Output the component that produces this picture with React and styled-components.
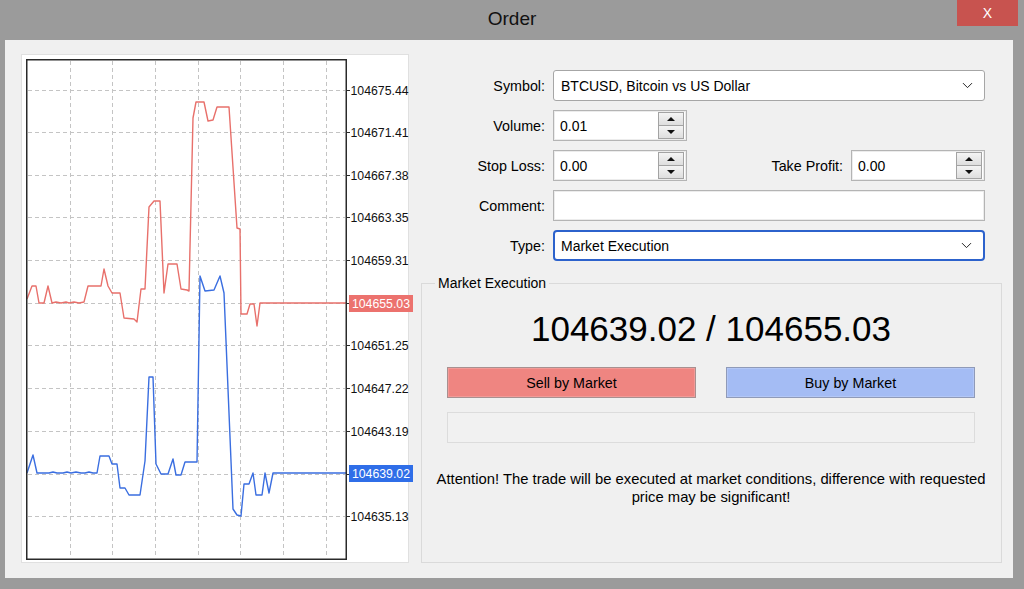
import React from "react";
import styled, { createGlobalStyle } from "styled-components";
import { ChevronDown } from "lucide-react";

const Global = createGlobalStyle`
  html, body { margin: 0; padding: 0; }
  body {
    background: #9b9b9b;
    font-family: "Liberation Sans", Arial, sans-serif;
    color: #000;
  }
  * { box-sizing: border-box; }
`;

const Window = styled.div`
  width: 1024px;
  height: 589px;
  display: flex;
  flex-direction: column;
  background: #9b9b9b;
`;

const TitleBar = styled.div`
  height: 40px;
  display: grid;
  grid-template-columns: 1fr auto 1fr;
  align-items: start;
`;

const Title = styled.div`
  grid-column: 2;
  font-size: 19px;
  line-height: 38px;
  color: #111;
`;

const CloseButton = styled.div`
  grid-column: 3;
  justify-self: end;
  margin-right: 6px;
  width: 61px;
  height: 26px;
  background: #c8534f;
  color: #fff;
  font-size: 14px;
  display: flex;
  align-items: center;
  justify-content: center;
`;

const Body = styled.div`
  margin: 0 11px 11px 5px;
  height: 538px;
  background: #f0f0f0;
  padding: 14px 11px 15px 16px;
  display: flex;
  gap: 12px;
`;

const ChartPanel = styled.div`
  width: 388px;
  flex: none;
  background: #fff;
  border: 1px solid #e0e0e0;
`;

const ChartSvg = styled.svg`
  display: block;
  overflow: visible;
`;

const RightColumn = styled.div`
  flex: 1;
  display: flex;
  flex-direction: column;
  padding-top: 16px;
`;

const Form = styled.div`
  display: flex;
  flex-direction: column;
  gap: 9px;
  padding-right: 17px;
`;

const Row = styled.div`
  display: grid;
  grid-template-columns: 124px 1fr;
  column-gap: 8px;
  align-items: center;
  height: 31px;
`;

const Label = styled.div`
  font-size: 14.3px;
  text-align: right;
  white-space: nowrap;
`;

const FieldLine = styled.div`
  display: flex;
  align-items: center;
  gap: 8px;
`;

const Spacer = styled.div`
  flex: 1;
`;

const Select = styled.div`
  height: 31px;
  display: flex;
  align-items: center;
  justify-content: space-between;
  padding: 0 8px 0 7px;
  background: #fff;
  font-size: 14px;
  border: ${(p) => (p.$focused ? "2px solid #2c62cc" : "1px solid #a6a6a6")};
  border-radius: ${(p) => (p.$focused ? "4px" : "3px")};
  padding-left: ${(p) => (p.$focused ? "6px" : "7px")};
`;

const TextBox = styled.div`
  height: 31px;
  background: #fff;
  border: 1px solid #b4b4b4;
  box-shadow: inset 0 0 0 1px #ececec;
  font-size: 14px;
  display: flex;
  align-items: center;
  padding-left: 6px;
  width: ${(p) => p.$width || "auto"};
`;

const SpinBox = styled(TextBox)`
  justify-content: space-between;
  padding-right: 2px;
`;

const SpinButtons = styled.div`
  width: 26px;
  height: 27px;
  display: flex;
  flex-direction: column;
`;

const SpinButton = styled.div`
  flex: 1;
  border: 1px solid #a3a3a3;
  background: linear-gradient(#f4f4f4, #dedede);
  display: flex;
  align-items: center;
  justify-content: center;
  & + & { margin-top: -1px; }
`;

const Arrow = styled.div`
  width: 0;
  height: 0;
  border-left: 4px solid transparent;
  border-right: 4px solid transparent;
  ${(p) => (p.$up ? "border-bottom: 4px solid #111;" : "border-top: 4px solid #111;")}
`;

const Group = styled.div`
  position: relative;
  flex: 1;
  margin-top: 22px;
  border: 1px solid #dadada;
  display: flex;
  flex-direction: column;
  align-items: stretch;
  padding: 25px 26px 0 25px;
`;

const GroupCaption = styled.div`
  position: absolute;
  top: -10px;
  left: 13px;
  padding: 0 3px;
  background: #f0f0f0;
  font-size: 14px;
  line-height: 18px;
`;

const Quote = styled.div`
  font-size: 35px;
  line-height: 40px;
  text-align: center;
  color: #000;
`;

const Buttons = styled.div`
  margin-top: 18px;
  display: grid;
  grid-template-columns: 1fr 1fr;
  gap: 30px;
`;

const TradeButton = styled.div`
  height: 31px;
  display: flex;
  align-items: center;
  justify-content: center;
  font-size: 14.3px;
  background: ${(p) => (p.$side === "sell" ? "#ef8581" : "#a4bcf4")};
  border: 1px solid ${(p) => (p.$side === "sell" ? "#a89090" : "#8f9ab8")};
  box-shadow: inset 0 0 0 1px ${(p) => (p.$side === "sell" ? "#f39a97" : "#b3c7f6")};
`;

const EmptyBox = styled.div`
  margin-top: 14px;
  height: 31px;
  border: 1px solid #dcdcdc;
  background: #f1f1f1;
`;

const Notice = styled.div`
  margin: 27px -20px 0 -20px;
  font-size: 14.8px;
  line-height: 18px;
  text-align: center;
`;

const red = [
  [5, 244], [10, 231], [14, 231], [17, 248], [22, 248], [26, 231], [30, 248], [34, 247],
  [39, 248], [44, 247], [47, 248], [52, 247], [57, 248], [62, 247], [66, 231], [79, 231],
  [82, 214], [86, 231], [90, 238], [98, 238], [102, 263], [112, 264], [115, 267], [119, 234],
  [123, 234], [127, 152], [132, 146], [138, 146], [142, 238], [146, 209], [155, 209], [159, 234],
  [165, 235], [167, 236], [171, 63], [174, 47], [182, 47], [186, 66], [191, 65], [195, 52],
  [207, 52], [215, 173], [218, 174], [219, 259], [225, 259], [228, 249], [232, 249], [235, 271],
  [238, 248], [324, 248],
];

const blue = [
  [5, 418], [11, 400], [15, 418], [27, 418], [31, 417], [35, 418], [41, 418], [45, 417],
  [49, 418], [54, 417], [59, 418], [63, 418], [67, 417], [71, 418], [75, 418], [78, 401],
  [87, 401], [90, 409], [95, 409], [98, 433], [103, 433], [107, 440], [118, 440], [123, 406],
  [127, 322], [131, 322], [134, 409], [139, 419], [146, 419], [151, 404], [154, 420], [159, 420],
  [163, 407], [175, 407], [178, 221], [183, 236], [192, 235], [198, 221], [202, 238], [211, 454],
  [215, 460], [219, 461], [222, 429], [227, 429], [231, 418], [234, 440], [240, 440], [243, 418],
  [247, 438], [251, 418], [324, 418],
];

const levels = [
  ["104675.44", 35], ["104671.41", 77], ["104667.38", 120], ["104663.35", 162],
  ["104659.31", 205], ["104655.03", 248], ["104651.25", 290], ["104647.22", 333],
  ["104643.19", 376], ["104639.02", 419], ["104635.13", 461],
];

const vGrid = [48, 90, 133, 176, 218, 261, 304];

const toPts = (arr) => arr.map(([x, y]) => `${x},${y}`).join(" ");

const FONT = "'Liberation Sans', Arial, sans-serif";

function Chart() {
  return (
    <ChartSvg width="386" height="507" viewBox="0 0 386 507">
      <g stroke="#c4c4c4" strokeWidth="1" strokeDasharray="4 3">
        {vGrid.map((x) => (
          <line key={x} x1={x + 0.5} y1="6" x2={x + 0.5} y2="503" />
        ))}
        {levels.map(([, y]) => (
          <line key={y} x1="6" y1={y + 0.5} x2="323" y2={y + 0.5} />
        ))}
      </g>
      <polyline points={toPts(red)} fill="none" stroke="#e8706b" strokeWidth="1.4" strokeLinejoin="round" />
      <polyline points={toPts(blue)} fill="none" stroke="#3a6ee0" strokeWidth="1.4" strokeLinejoin="round" />
      <rect x="4.75" y="4.75" width="319.5" height="499.5" fill="none" stroke="#2a2a2a" strokeWidth="1.5" />
      <g stroke="#2a2a2a" strokeWidth="1">
        {levels.map(([, y]) => (
          <line key={y} x1="324" y1={y + 0.5} x2="328" y2={y + 0.5} />
        ))}
      </g>
      <g fontFamily={FONT} fontSize="12.3" fill="#111">
        {levels.map(([t, y]) =>
          t === "104655.03" || t === "104639.02" ? null : (
            <text key={t} x="328.5" y={y + 4.5}>{t}</text>
          )
        )}
      </g>
      <rect x="327" y="240" width="64" height="17" fill="#ec726e" />
      <text x="359" y="252.5" textAnchor="middle" fontFamily={FONT} fontSize="12.3" fill="#fff">104655.03</text>
      <rect x="327" y="410" width="64" height="17" fill="#2f6ee8" />
      <text x="359" y="422.5" textAnchor="middle" fontFamily={FONT} fontSize="12.3" fill="#fff">104639.02</text>
    </ChartSvg>
  );
}

function Spin({ value }) {
  return (
    <SpinBox $width="134px">
      <span>{value}</span>
      <SpinButtons>
        <SpinButton><Arrow $up /></SpinButton>
        <SpinButton><Arrow /></SpinButton>
      </SpinButtons>
    </SpinBox>
  );
}

export default function App() {
  return (
    <>
      <Global />
      <Window>
        <TitleBar>
          <Title>Order</Title>
          <CloseButton>X</CloseButton>
        </TitleBar>
        <Body>
          <ChartPanel>
            <Chart />
          </ChartPanel>
          <RightColumn>
            <Form>
              <Row>
                <Label>Symbol:</Label>
                <Select>
                  <span>BTCUSD, Bitcoin vs US Dollar</span>
                  <ChevronDown size={17} strokeWidth={1.4} color="#222" />
                </Select>
              </Row>
              <Row>
                <Label>Volume:</Label>
                <FieldLine>
                  <Spin value="0.01" />
                </FieldLine>
              </Row>
              <Row>
                <Label>Stop Loss:</Label>
                <FieldLine>
                  <Spin value="0.00" />
                  <Spacer />
                  <Label>Take Profit:</Label>
                  <Spin value="0.00" />
                </FieldLine>
              </Row>
              <Row>
                <Label>Comment:</Label>
                <TextBox />
              </Row>
              <Row>
                <Label>Type:</Label>
                <Select $focused>
                  <span>Market Execution</span>
                  <ChevronDown size={17} strokeWidth={1.4} color="#222" />
                </Select>
              </Row>
            </Form>
            <Group>
              <GroupCaption>Market Execution</GroupCaption>
              <Quote>104639.02 / 104655.03</Quote>
              <Buttons>
                <TradeButton $side="sell">Sell by Market</TradeButton>
                <TradeButton $side="buy">Buy by Market</TradeButton>
              </Buttons>
              <EmptyBox />
              <Notice>
                Attention! The trade will be executed at market conditions, difference with requested
                <br />
                price may be significant!
              </Notice>
            </Group>
          </RightColumn>
        </Body>
      </Window>
    </>
  );
}
